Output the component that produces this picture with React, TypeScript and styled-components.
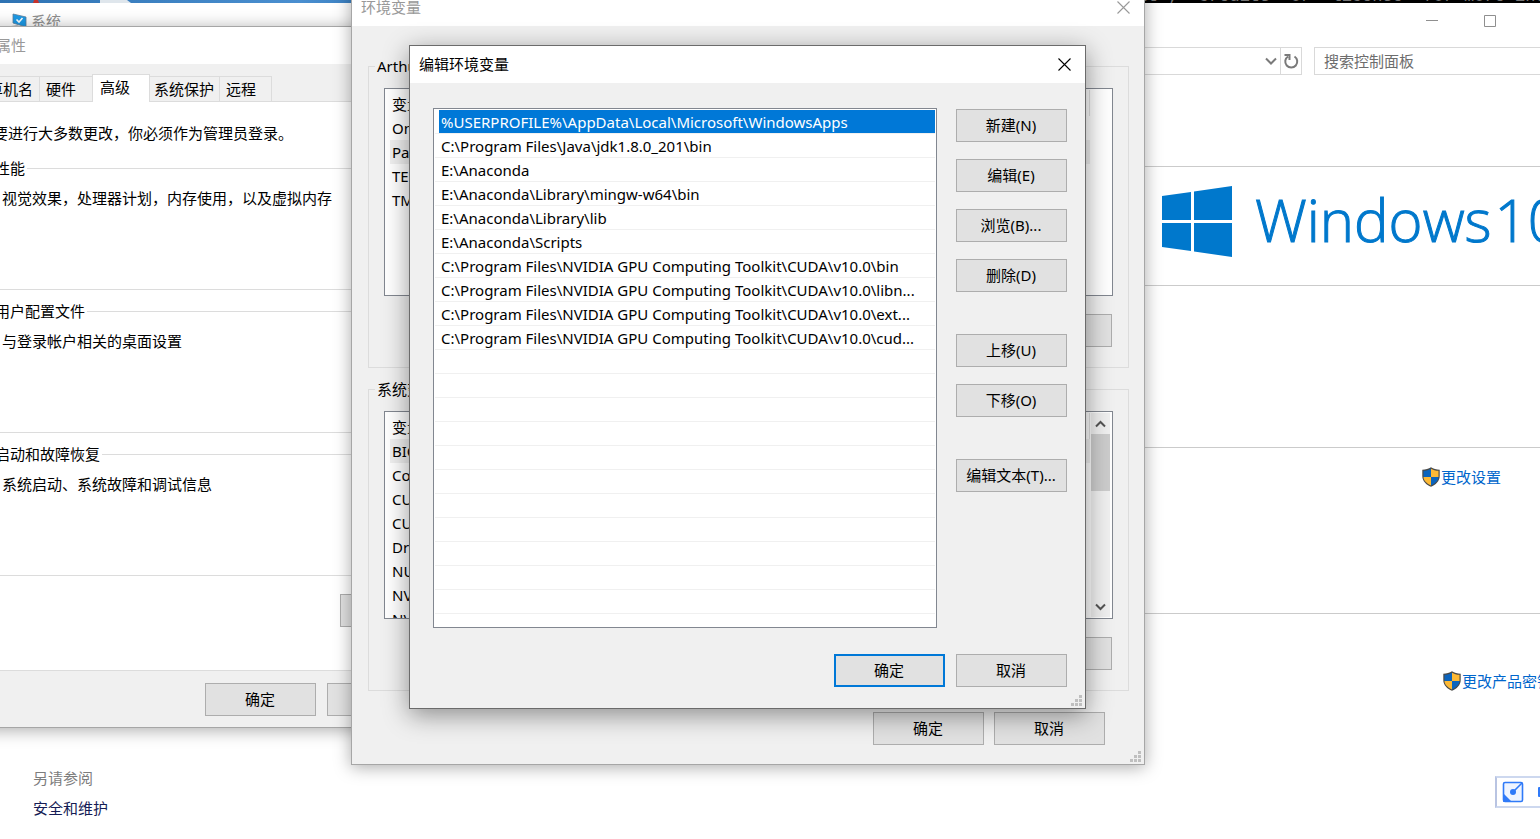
import React from "react";
import styled, { createGlobalStyle, css } from "styled-components";

const GlobalStyle = createGlobalStyle`
  *, *::before, *::after { box-sizing: border-box; }
  html, body { margin: 0; }
  body, button, input {
    font-family: "Noto Sans", "Noto Sans CJK SC", sans-serif;
    font-size: 15px;
    line-height: 20px;
    color: #000;
  }
  button, input { margin: 0; border-radius: 0; }
`;

/* ---------- desktop ---------- */

const Desktop = styled.main`
  position: relative;
  display: flex;
  flex-direction: column;
  min-height: 100vh;
  padding-top: 3px;
  overflow: hidden;
  background: linear-gradient(90deg, #2f73b3, #4a8fd0 300px, #3a7fc0 360px);
`;

const Terminal = styled.div`
  position: absolute;
  top: -14px;
  left: 1056px;
  right: 0;
  height: 24px;
  background: #000;
  color: #757575;
  font-family: "Liberation Mono", monospace;
  font-size: 17px;
  line-height: 22px;
  white-space: pre;
`;

const Wallpaper = styled.svg`
  position: absolute;
  top: 0;
  left: 0;
`;

/* ---------- shared controls ---------- */

const PushButton = styled.button<{ $primary?: boolean; $wide?: boolean }>`
  flex: none;
  width: ${(p) => (p.$wide ? 204 : 111)}px;
  height: 33px;
  padding: 0 1px 2px 0;
  border: ${(p) => (p.$primary ? "2px solid #0078d7" : "1px solid #adadad")};
  background: #e1e1e1;
  text-align: center;
`;

const Window = styled.section<{ $active?: boolean }>`
  position: absolute;
  display: flex;
  flex-direction: column;
  border: 1px solid ${(p) => (p.$active ? "#6b6b6b" : "#a6a6a6")};
  background: #f0f0f0;
  box-shadow: ${(p) =>
    p.$active ? "0 6px 24px rgba(0, 0, 0, 0.42)" : "0 2px 16px rgba(0, 0, 0, 0.34)"};
`;

const TitleBar = styled.header<{ $active?: boolean }>`
  display: flex;
  flex: none;
  align-items: center;
  justify-content: space-between;
  height: 37px;
  padding: 0 10px 0 9px;
  background: #fff;
  color: ${(p) => (p.$active ? "#000" : "#999")};
`;

const Title = styled.h2`
  margin: 0;
  padding-bottom: 2px;
  font-size: 15px;
  font-weight: 400;
`;

const IconButton = styled.button`
  display: flex;
  align-items: center;
  justify-content: center;
  width: 22px;
  height: 26px;
  padding: 0;
  border: 0;
  background: none;
  color: inherit;
`;

const ButtonRow = styled.div<{ $gap: number }>`
  display: flex;
  flex: none;
  justify-content: flex-end;
  gap: ${(p) => p.$gap}px;
`;

const GripSvg = styled.svg`
  position: absolute;
  right: 3px;
  bottom: 2px;
`;

const Grip = () => (
  <GripSvg width="11" height="11" fill="#bfbfbf" aria-hidden="true">
    <path d="M8 0h3v3H8zM4 4h3v3H4zM8 4h3v3H8zM0 8h3v3H0zM4 8h3v3H4zM8 8h3v3H8z" />
  </GripSvg>
);

const CloseIcon = () => (
  <svg width="13" height="13" fill="none" stroke="currentColor" strokeWidth="1.1" aria-hidden="true">
    <path d="M.5.5l12 12M12.5.5l-12 12" />
  </svg>
);

const GroupBox = styled.fieldset<{ $pad: number; $height: number }>`
  min-width: 0;
  height: ${(p) => p.$height}px;
  margin: 0;
  padding: 0 ${(p) => p.$pad}px;
  border: 1px solid #dcdcdc;
`;

const Legend = styled.legend<{ $indent?: boolean }>`
  margin-left: ${(p) => (p.$indent ? -9 : 0)}px;
  padding: 0 2px;
  white-space: nowrap;
`;

/* ---------- control panel window ---------- */

const PanelWindow = styled.section`
  position: relative;
  display: flex;
  flex: 1;
  flex-direction: column;
  margin-right: -37px;
  background: #fff;
`;

const PanelTitle = styled.header`
  display: flex;
  align-items: center;
  height: 36px;
  padding-left: 11px;
  color: #8f8f8f;
`;

const PanelTitleText = styled.h1`
  flex: 1;
  margin: 0;
  padding-left: 3px;
  font-size: 15px;
  font-weight: 400;
`;

const CaptionButton = styled(IconButton)`
  width: 58px;
  height: 34px;
  color: #8f8f8f;
`;

const AddressRow = styled.div`
  display: flex;
  gap: 12px;
  padding: 8px 12px 0;
`;

const AddressBox = styled.div`
  display: flex;
  flex: 1;
  justify-content: flex-end;
  height: 28px;
  border: 1px solid #d9d9d9;
  color: #7a7a7a;
`;

const HistoryButton = styled(IconButton)`
  width: 18px;
`;

const RefreshButton = styled(IconButton)`
  width: 21px;
  border-left: 1px solid #d9d9d9;
`;

const SearchInput = styled.input`
  width: 251px;
  height: 28px;
  padding: 0 9px;
  border: 1px solid #d9d9d9;
  background: #fff;
  &::placeholder { color: #6d6d6d; opacity: 1; }
`;

const PanelBody = styled.div`
  display: flex;
  flex: 1;
`;

const Sidebar = styled.nav`
  display: flex;
  flex: none;
  flex-direction: column;
  justify-content: flex-end;
  gap: 10px;
  width: 320px;
  padding: 0 0 21px 33px;
  color: #7d7d7d;
`;

const SideLink = styled.a`
  color: #151c55;
  text-decoration: none;
`;

const PanelMain = styled.div`
  flex: 1;
  padding-top: 91px;
`;

const Section = styled.div<{ $height: number; $top?: number; $right?: number }>`
  display: flex;
  align-items: flex-start;
  justify-content: flex-end;
  height: ${(p) => p.$height}px;
  padding: ${(p) => p.$top ?? 0}px ${(p) => p.$right ?? 25}px 0 0;
  border-top: 1px solid #cbcbcb;
`;

const Brand = styled.div`
  display: flex;
  flex: none;
  align-items: center;
  gap: 23px;
  width: 390px;
  height: 71px;
  color: #0078cc;
  svg { flex: none; }
`;

const BrandName = styled.div`
  display: flex;
  gap: 3px;
  padding-bottom: 3px;
  font-family: "Open Sans", "Noto Sans", sans-serif;
  font-size: 58px;
  font-weight: 300;
  line-height: 68px;
  white-space: nowrap;
  -webkit-text-stroke: 1px currentColor;
`;

const ShieldLink = styled.a`
  display: flex;
  align-items: center;
  gap: 1px;
  color: #0066cc;
  text-decoration: none;
  white-space: nowrap;
`;

const Shield = () => (
  <svg width="18" height="20" viewBox="0 0 18 20" aria-hidden="true">
    <path d="M9 .3C6.700 2 3.500 2.700.3 2.700V9c0 5.200 4 8.900 8.700 10.700C13.700 17.900 17.700 14.200 17.700 9V2.700C14.500 2.700 11.300 2 9 .3z" fill="#4a4a48" />
    <path d="M9 1.700C7 3 4.300 3.700 1.500 3.800V10H9z" fill="#0b64bd" />
    <path d="M9 1.700c2 1.300 4.700 2 7.500 2.100V10H9z" fill="#fdb935" />
    <path d="M1.500 10H9v8.400C5 16.800 1.700 13.900 1.500 10z" fill="#fdb935" />
    <path d="M16.500 10H9v8.400c4-1.600 7.300-4.500 7.500-8.400z" fill="#0b64bd" />
  </svg>
);

const WindowsLogo = () => (
  <svg width="70" height="71" viewBox="0 0 70 71" fill="currentColor" aria-hidden="true">
    <path d="M0 10l29-4v28H0zM32 5.500L70 0v34H32zM0 37h29v28L0 61zM32 37h38v34l-38-5.500z" />
  </svg>
);

const ComputerIcon = () => (
  <svg width="17" height="17" viewBox="0 0 17 17" aria-hidden="true">
    <path d="M2 1l13 3v10L2 10z" fill="#1c9be8" stroke="#5a7f9c" strokeWidth=".8" />
    <path d="M5.500 6.500l2.500 2.500 3.500-4" stroke="#fff" strokeWidth="1.600" fill="none" />
    <path d="M0 13l6-1 9 3-4 2z" fill="#b9bcc0" />
  </svg>
);

/* ---------- system properties window ---------- */

const PropertiesWindow = styled(Window)`
  top: 26px;
  left: -44px;
  width: 616px;
  height: 702px;
`;

const TabStrip = styled.div`
  display: flex;
  flex: none;
  align-items: flex-end;
  height: 37px;
  padding-left: 10px;
`;

const Tab = styled.button<{ $width: number; $selected?: boolean }>`
  width: ${(p) => p.$width}px;
  height: 25px;
  padding: 0 0 0 6px;
  border: 1px solid #dcdcdc;
  border-width: 1px 1px 0 0;
  background: #f0f0f0;
  text-align: left;
  white-space: nowrap;
  ${(p) =>
    p.$selected &&
    css`
      position: relative;
      height: 28px;
      margin: 0 -2px -1px;
      padding: 0 0 4px 7px;
      border-left-width: 1px;
      background: #fff;
    `}
`;

const TabPanel = styled.div`
  display: flex;
  flex: 1;
  flex-direction: column;
  gap: 11px;
  margin: 0 10px;
  padding: 21px 16px 0 16px;
  border: 1px solid #dcdcdc;
  background: #fff;
`;

const Notice = styled.p`
  margin: 0 0 4px;
  padding-left: 9px;
`;

const GroupText = styled.p`
  margin: 0;
  padding: 10px 0 0 9px;
`;

const PanelAction = styled.div`
  display: flex;
  justify-content: flex-end;
  padding-top: 7px;
`;

const PropertiesFooter = styled(ButtonRow)`
  padding: 12px 11px 11px;
`;

/* ---------- environment variables window ---------- */

const EnvWindow = styled(Window)`
  top: -12px;
  left: 351px;
  width: 794px;
  height: 777px;
`;

const EnvBody = styled.div`
  display: flex;
  flex: 1;
  flex-direction: column;
  gap: 11px;
  padding: 30px 15px 0 16px;
`;

const EnvFooter = styled(ButtonRow)`
  padding: 10px 24px 0 0;
`;

const VariableList = styled.div`
  display: flex;
  height: 208px;
  margin: 12px 0 18px;
  padding: 1px 2px 1px 5px;
  border: 1px solid #828790;
  background: #fff;
  overflow: hidden;
`;

const VariableButtons = styled(ButtonRow)`
  padding-right: 1px;
`;

const VariableTable = styled.table`
  flex: 1;
  align-self: flex-start;
  border-collapse: collapse;
  table-layout: fixed;
  margin-right: 1px;
  th, td {
    height: 24px;
    padding: 0 2px;
    text-align: left;
    font-weight: 400;
    white-space: nowrap;
  }
  th { height: 26px; padding-top: 2px; border-right: 1px solid #e2e2e2; }
`;

const VariableRow = styled.tr<{ $selected?: boolean }>`
  background: ${(p) => (p.$selected ? "#f0f0f0" : "transparent")};
`;

const ScrollSpace = styled.div`
  flex: none;
  width: 19px;
`;

const ScrollBar = styled.div`
  display: flex;
  flex: none;
  flex-direction: column;
  align-items: center;
  width: 19px;
  background: #f0f0f0;
`;

const ScrollButton = styled.button`
  width: 19px;
  height: 21px;
  padding: 0;
  border: 0;
  background: none;
  line-height: 0;
`;

const ScrollThumb = styled.div`
  width: 19px;
  height: 57px;
  margin-bottom: auto;
  background: #cdcdcd;
`;

const Chevron = ({ up }: { up?: boolean }) => (
  <svg width="11" height="8" fill="none" stroke="#555" strokeWidth="2" aria-hidden="true">
    <path d={up ? "M1 6.500L5.500 2 10 6.500" : "M1 1.500L5.500 6 10 1.500"} />
  </svg>
);

/* ---------- edit dialog ---------- */

const EditDialog = styled(Window)`
  top: 45px;
  left: 409px;
  width: 677px;
  height: 664px;
`;

const EditBody = styled.div`
  display: flex;
  flex: none;
  gap: 19px;
  padding: 25px 18px 0 23px;
`;

const PathList = styled.ul`
  flex: 1;
  min-width: 0;
  height: 520px;
  margin: 0;
  padding: 1px;
  border: 1px solid #828790;
  background: #fff;
  list-style: none;
`;

const PathItem = styled.li`
  height: 24px;
  padding-left: 4px;
  border-bottom: 1px solid #f0f0f0;
  white-space: nowrap;
`;

const PathText = styled.span<{ $selected?: boolean }>`
  display: block;
  height: 23px;
  padding: 2px 0 0 2px;
  background: ${(p) => (p.$selected ? "#0078d7" : "transparent")};
  color: ${(p) => (p.$selected ? "#fff" : "#000")};
`;

const ActionColumn = styled.div`
  display: flex;
  flex: none;
  flex-direction: column;
  gap: 42px;
  padding-top: 1px;
`;

const ActionGroup = styled.div`
  display: flex;
  flex-direction: column;
  gap: 17px;
`;

const EditFooter = styled(ButtonRow)`
  padding: 26px 18px 0 0;
`;

/* ---------- input method toolbar ---------- */

const ImeBar = styled.div`
  position: absolute;
  right: -75px;
  bottom: 31px;
  display: flex;
  align-items: center;
  gap: 14px;
  width: 120px;
  height: 32px;
  padding-left: 5px;
  border: 2px solid #cdd8ef;
  border-left-color: #b9c4e2;
  background: #fff;
`;

const ImeIcon = () => (
  <svg width="22" height="22" viewBox="0 0 22 22" fill="none" stroke="#2f7af8" aria-hidden="true">
    <rect x="1.500" y="1.500" width="19" height="19" rx="1.500" fill="#eef4ff" strokeWidth="1.600" />
    <path d="M1 12l9 9H2a1 1 0 0 1-1-1z" fill="#2f7af8" stroke="none" />
    <circle cx="11" cy="11" r="3" fill="#2f7af8" stroke="none" />
    <path d="M11 11l9-9" strokeWidth="1.600" />
  </svg>
);

const ImeModeIcon = () => (
  <svg width="20" height="10" aria-hidden="true">
    <rect width="20" height="10" rx="1" fill="#2f7af8" />
  </svg>
);

/* ---------- data ---------- */

const PATHS = [
  "%USERPROFILE%\\AppData\\Local\\Microsoft\\WindowsApps",
  "C:\\Program Files\\Java\\jdk1.8.0_201\\bin",
  "E:\\Anaconda",
  "E:\\Anaconda\\Library\\mingw-w64\\bin",
  "E:\\Anaconda\\Library\\lib",
  "E:\\Anaconda\\Scripts",
  "C:\\Program Files\\NVIDIA GPU Computing Toolkit\\CUDA\\v10.0\\bin",
  "C:\\Program Files\\NVIDIA GPU Computing Toolkit\\CUDA\\v10.0\\libn...",
  "C:\\Program Files\\NVIDIA GPU Computing Toolkit\\CUDA\\v10.0\\ext...",
  "C:\\Program Files\\NVIDIA GPU Computing Toolkit\\CUDA\\v10.0\\cud...",
];
const LIST_ROWS = 21;

const USER_VARIABLES = ["One", "Path", "TEM", "TMP"];
const SYSTEM_VARIABLES = ["BIO", "Com", "CUD", "CUD", "Dri", "NUM", "NVC", "NVT"];

const ACTIONS = [
  ["新建(N)", "编辑(E)", "浏览(B)...", "删除(D)"],
  ["上移(U)", "下移(O)"],
  ["编辑文本(T)..."],
];

const TABS = [
  { label: "计算机名", width: 73 },
  { label: "硬件", width: 54 },
  { label: "高级", width: 58, selected: true },
  { label: "系统保护", width: 72 },
  { label: "远程", width: 52 },
];

const GROUPS = [
  { title: "性能", text: "视觉效果，处理器计划，内存使用，以及虚拟内存" },
  { title: "用户配置文件", text: "与登录帐户相关的桌面设置" },
  { title: "启动和故障恢复", text: "系统启动、系统故障和调试信息" },
];

const Variables = ({
  title,
  names,
  selected,
  scroll,
}: {
  title: string;
  names: string[];
  selected: number;
  scroll?: boolean;
}) => (
  <GroupBox $pad={15} $height={312}>
    <Legend $indent>{title}</Legend>
    <VariableList>
      <VariableTable>
        <thead>
          <tr>
            <th>变量</th>
          </tr>
        </thead>
        <tbody>
          {names.map((name, i) => (
            <VariableRow key={i} $selected={i === selected}>
              <td>{name}</td>
            </VariableRow>
          ))}
        </tbody>
      </VariableTable>
      {scroll ? (
        <ScrollBar>
          <ScrollButton aria-label="向上滚动"><Chevron up /></ScrollButton>
          <ScrollThumb />
          <ScrollButton aria-label="向下滚动"><Chevron /></ScrollButton>
        </ScrollBar>
      ) : (
        <ScrollSpace />
      )}
    </VariableList>
    <VariableButtons $gap={10}>
      <PushButton aria-label="删除" />
    </VariableButtons>
  </GroupBox>
);

export default function App() {
  return (
    <Desktop>
      <GlobalStyle />
      <Wallpaper width="140" height="3" aria-hidden="true">
        <path d="M100 0h27l4 3h-31z" fill="#dfe6ec" />
        <path d="M34 0h4l1 3h-6z" fill="#c8322b" />
      </Wallpaper>
      <Terminal>{'"copyright", "credits" or "license" for more information.'}</Terminal>

      <PanelWindow>
        <PanelTitle>
          <ComputerIcon />
          <PanelTitleText>系统</PanelTitleText>
          <CaptionButton aria-label="最小化">
            <svg width="12" height="12" stroke="currentColor"><path d="M0 5.500h12" /></svg>
          </CaptionButton>
          <CaptionButton aria-label="最大化">
            <svg width="12" height="12" fill="none" stroke="currentColor"><path d="M.5.5h11v11H.5z" /></svg>
          </CaptionButton>
          <CaptionButton aria-label="关闭"><CloseIcon /></CaptionButton>
        </PanelTitle>
        <AddressRow>
          <AddressBox>
            <HistoryButton aria-label="历史记录">
              <svg width="12" height="9" fill="none" stroke="currentColor" strokeWidth="2">
                <path d="M1 1.500l5 5 5-5" />
              </svg>
            </HistoryButton>
            <RefreshButton aria-label="刷新">
              <svg width="16" height="16" fill="none" stroke="currentColor" strokeWidth="2">
                <path d="M11.500 3.500A6 6 0 1 1 5 3.500M1.500 2h5v5" />
              </svg>
            </RefreshButton>
          </AddressBox>
          <SearchInput aria-label="搜索控制面板" placeholder="搜索控制面板" />
        </AddressRow>
        <PanelBody>
          <Sidebar>
            <span>另请参阅</span>
            <SideLink href="#security">安全和维护</SideLink>
          </Sidebar>
          <PanelMain>
            <Section $height={119} $top={19}>
              <Brand>
                <WindowsLogo />
                <BrandName><span>Windows</span><span>10</span></BrandName>
              </Brand>
            </Section>
            <Section $height={162} />
            <Section $height={166} $top={19} $right={76}>
              <ShieldLink href="#settings"><Shield />更改设置</ShieldLink>
            </Section>
            <Section $height={166} $top={57}>
              <ShieldLink href="#key"><Shield />更改产品密钥</ShieldLink>
            </Section>
          </PanelMain>
        </PanelBody>
      </PanelWindow>

      <PropertiesWindow>
        <TitleBar>
          <Title>系统属性</Title>
        </TitleBar>
        <TabStrip role="tablist">
          {TABS.map((t) => (
            <Tab key={t.label} role="tab" aria-selected={!!t.selected} $width={t.width} $selected={t.selected}>
              {t.label}
            </Tab>
          ))}
        </TabStrip>
        <TabPanel>
          <Notice>要进行大多数更改，你必须作为管理员登录。</Notice>
          {GROUPS.map((g) => (
            <GroupBox key={g.title} $pad={8} $height={132}>
              <Legend>{g.title}</Legend>
              <GroupText>{g.text}</GroupText>
            </GroupBox>
          ))}
          <PanelAction>
            <PushButton $wide aria-label="环境变量" />
          </PanelAction>
        </TabPanel>
        <PropertiesFooter $gap={11}>
          <PushButton>确定</PushButton>
          <PushButton aria-label="取消" />
          <PushButton aria-label="应用" />
        </PropertiesFooter>
      </PropertiesWindow>

      <EnvWindow>
        <TitleBar>
          <Title>环境变量</Title>
          <IconButton aria-label="关闭"><CloseIcon /></IconButton>
        </TitleBar>
        <EnvBody>
          <Variables title="Arthur" names={USER_VARIABLES} selected={1} />
          <Variables title="系统变量" names={SYSTEM_VARIABLES} selected={0} scroll />
          <EnvFooter $gap={10}>
            <PushButton>确定</PushButton>
            <PushButton>取消</PushButton>
          </EnvFooter>
        </EnvBody>
        <Grip />
      </EnvWindow>

      <EditDialog $active role="dialog" aria-label="编辑环境变量">
        <TitleBar $active>
          <Title>编辑环境变量</Title>
          <IconButton aria-label="关闭"><CloseIcon /></IconButton>
        </TitleBar>
        <EditBody>
          <PathList>
            {Array.from({ length: LIST_ROWS }, (_, i) => (
              <PathItem key={i}>
                {PATHS[i] && <PathText $selected={i === 0}>{PATHS[i]}</PathText>}
              </PathItem>
            ))}
          </PathList>
          <ActionColumn>
            {ACTIONS.map((group) => (
              <ActionGroup key={group[0]}>
                {group.map((label) => (
                  <PushButton key={label}>{label}</PushButton>
                ))}
              </ActionGroup>
            ))}
          </ActionColumn>
        </EditBody>
        <EditFooter $gap={11}>
          <PushButton $primary>确定</PushButton>
          <PushButton>取消</PushButton>
        </EditFooter>
        <Grip />
      </EditDialog>

      <ImeBar>
        <ImeIcon />
        <ImeModeIcon />
      </ImeBar>
    </Desktop>
  );
}
